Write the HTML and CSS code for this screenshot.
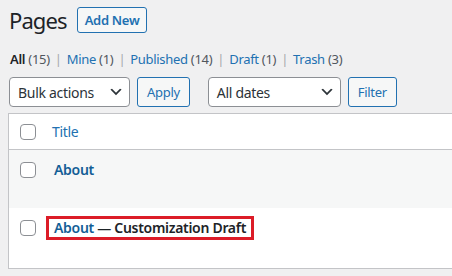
FILE: index.html
```html
<!DOCTYPE html>
<html>
<head>
  <meta charset="utf-8">
  <title>Pages</title>
  <link rel="stylesheet" href="styles.css">
</head>
<body>
  <div class="wrap">
    <div class="page-head">
      <h1>Pages</h1>
      <a class="title-action" href="#">Add New</a>
    </div>

    <ul class="subsubsub">
      <li class="current">All <span class="count">(15)</span></li>
      <li class="sep">|</li>
      <li><a href="#">Mine <span class="count">(1)</span></a></li>
      <li class="sep">|</li>
      <li><a href="#">Published <span class="count">(14)</span></a></li>
      <li class="sep">|</li>
      <li><a href="#">Draft <span class="count">(1)</span></a></li>
      <li class="sep">|</li>
      <li><a href="#">Trash <span class="count">(3)</span></a></li>
    </ul>

    <div class="tablenav">
      <div class="actions">
        <div class="select bulk">
          <span>Bulk actions</span>
          <svg width="16" height="16" viewBox="0 0 20 20"><path d="M5 6l5 5 5-5 2 1-7 7-7-7 2-1z" fill="#2c3338"/></svg>
        </div>
        <a class="button" href="#">Apply</a>
      </div>
      <div class="actions">
        <div class="select dates">
          <span>All dates</span>
          <svg width="16" height="16" viewBox="0 0 20 20"><path d="M5 6l5 5 5-5 2 1-7 7-7-7 2-1z" fill="#2c3338"/></svg>
        </div>
        <a class="button" href="#">Filter</a>
      </div>
    </div>

    <table class="list">
      <thead>
        <tr>
          <td class="check"><span class="box"></span></td>
          <th><a href="#">Title</a></th>
        </tr>
      </thead>
      <tbody>
        <tr class="alt first">
          <td class="check"><span class="box"></span></td>
          <td class="title"><a href="#">About</a></td>
        </tr>
        <tr class="second">
          <td class="check"><span class="box"></span></td>
          <td class="title"><span class="marked"><a href="#">About</a> — Customization Draft</span></td>
        </tr>
        <tr class="alt">
          <td class="check"></td>
          <td class="title"></td>
        </tr>
      </tbody>
    </table>
  </div>
</body>
</html>
```

FILE: styles.css
```css
/* WordPress-like admin list */
body {
  margin: 0;
  background-color: #f0f0f1;
  color: #3c434a;
  font-family: "Noto Sans", "Open Sans", sans-serif;
  font-size: 13px;
  letter-spacing: -0.3px;
  overflow: hidden;
}
a {
  color: #2271b1;
  text-decoration: none;
}
.wrap {
  padding: 6px 0 0 8px;
}
.page-head {
  display: flex;
  align-items: center;
  gap: 10px;
  height: 27px;
}
.page-head h1 {
  margin: 0 0 0 1px;
  font-size: 22px;
  font-weight: 400;
  letter-spacing: -0.9px;
  color: #1d2327;
}
.title-action {
  border: 1px solid #2271b1;
  border-radius: 3px;
  background-color: #f6f7f7;
  padding: 4px 7px;
  font-weight: 600;
  line-height: 16px;
}
.subsubsub {
  list-style-type: none;
  margin: 16px 0 0 2px;
  padding: 0;
  display: flex;
  gap: 5px;
  line-height: 20px;
  color: #646970;
}
.subsubsub .current {
  color: #1d2327;
  font-weight: 600;
}
.subsubsub .count {
  color: #50575e;
  font-weight: 400;
}
.subsubsub .sep {
  color: #a7aaad;
}
.tablenav {
  display: flex;
  gap: 18px;
  margin: 8px 0 0 1px;
}
.actions {
  display: flex;
  gap: 7px;
}
.select {
  box-sizing: border-box;
  height: 30px;
  border: 1px solid #8c8f94;
  border-radius: 4px;
  background-color: #fff;
  color: #2c3338;
  font-size: 14px;
  display: flex;
  align-items: center;
  justify-content: space-between;
  padding: 0 5px 0 8px;
}
.select.bulk {
  width: 121px;
}
.select.dates {
  width: 133px;
}
.button {
  box-sizing: border-box;
  height: 30px;
  border: 1px solid #2271b1;
  border-radius: 3px;
  background-color: #f6f7f7;
  padding: 0 9px;
  font-size: 13px;
  line-height: 28px;
}
.list {
  margin-top: 6px;
  width: 640px;
  border-collapse: collapse;
  border: 1px solid #c3c4c7;
  background-color: #fff;
}
.list td,
.list th {
  padding: 0;
  vertical-align: top;
  text-align: left;
}
.list thead tr {
  height: 36px;
  border-bottom: 1px solid #c3c4c7;
}
.list thead th {
  font-weight: 400;
  font-size: 14px;
  vertical-align: middle;
}
.list thead .check {
  vertical-align: middle;
}
.check {
  width: 43px;
}
.box {
  display: block;
  box-sizing: border-box;
  width: 16px;
  height: 16px;
  margin-left: 11px;
  border: 1px solid #8c8f94;
  border-radius: 4px;
  background-color: #fff;
}
.alt {
  background-color: #f6f7f7;
}
tr.first {
  height: 58px;
}
tr.first .box {
  margin-top: 12px;
}
tr.first .title {
  padding: 10px 0 0 2px;
}
tr.second {
  height: 60px;
}
tr.second .box {
  margin-top: 12px;
}
tr.second .title {
  padding: 8px 0 0 0;
}
.title {
  font-size: 14px;
  font-weight: 600;
  color: #1d2327;
}
.title a {
  color: #135e96;
}
.marked {
  display: inline-block;
  border: 3px solid #dc1c28;
  padding: 1px 5px 1px 5px;
  margin-left: -6px;
  line-height: 16px;
}
```
